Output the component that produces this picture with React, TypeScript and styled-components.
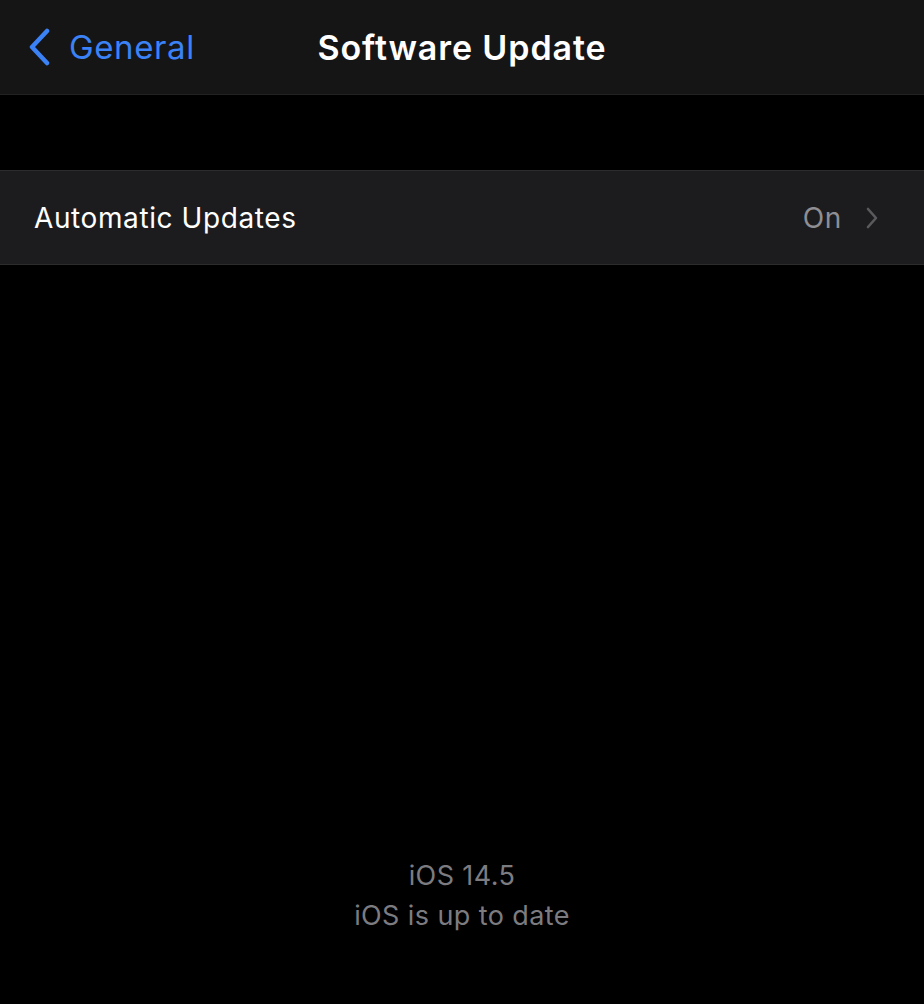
import React from 'react';
import styled, { createGlobalStyle } from 'styled-components';

const GlobalStyle = createGlobalStyle`
    html, body {
        margin: 0;
        padding: 0;
        background: #000;
    }
    body {
        font-family: Inter, 'Noto Sans', sans-serif;
        -webkit-font-smoothing: antialiased;
    }
`;

const Screen = styled.div`
    display: flex;
    flex-direction: column;
    height: 1004px;
    background: #000;
`;

const NavBar = styled.header`
    position: relative;
    display: flex;
    align-items: center;
    justify-content: center;
    height: 95px;
    background: #151515;
    border-bottom: 1px solid #222;
    box-sizing: border-box;
`;

const BackButton = styled.div`
    position: absolute;
    left: 27px;
    top: 0;
    bottom: 0;
    display: flex;
    align-items: center;
    gap: 18px;
    color: #3b82f6;
    font-size: 33px;
    letter-spacing: 0.6px;
`;

const Title = styled.h1`
    margin: 0;
    color: #fff;
    font-size: 34px;
    font-weight: 600;
    letter-spacing: 0.9px;
`;

const Spacer = styled.div`
    height: 75px;
`;

const Row = styled.div`
    display: flex;
    align-items: center;
    justify-content: space-between;
    height: 95px;
    padding: 0 46px 0 34px;
    background: #1c1c1e;
    border-top: 1px solid #2c2c2e;
    border-bottom: 1px solid #2c2c2e;
    box-sizing: border-box;
`;

const Label = styled.span`
    color: #fff;
    font-size: 28px;
    letter-spacing: 0.6px;
`;

const Detail = styled.span`
    display: flex;
    align-items: center;
    gap: 24px;
    color: #8e8e93;
    font-size: 28px;
    letter-spacing: 0.6px;
`;

const Footer = styled.div`
    flex: 1;
    display: flex;
    flex-direction: column;
    justify-content: flex-end;
    align-items: center;
    padding-bottom: 68px;
`;

const FooterLine = styled.div`
    color: #7c7c80;
    font-size: 27px;
    line-height: 40px;
    letter-spacing: 0.4px;
`;

const App = () => (
    <>
        <GlobalStyle />
        <Screen>
            <NavBar>
                <BackButton>
                    <svg width="24" height="38" viewBox="0 0 24 38">
                        <path d="M20 3 L5 19 L20 35" fill="none" stroke="#3b82f6" strokeWidth="4.5" strokeLinecap="round" strokeLinejoin="round" />
                    </svg>
                    General
                </BackButton>
                <Title>Software Update</Title>
            </NavBar>
            <Spacer />
            <Row>
                <Label>Automatic Updates</Label>
                <Detail>
                    On
                    <svg width="12" height="22" viewBox="0 0 12 22">
                        <path d="M2 2 L10 11 L2 20" fill="none" stroke="#5a5a5e" strokeWidth="2.6" strokeLinecap="round" strokeLinejoin="round" />
                    </svg>
                </Detail>
            </Row>
            <Footer>
                <FooterLine>iOS 14.5</FooterLine>
                <FooterLine>iOS is up to date</FooterLine>
            </Footer>
        </Screen>
    </>
);

export default App;
